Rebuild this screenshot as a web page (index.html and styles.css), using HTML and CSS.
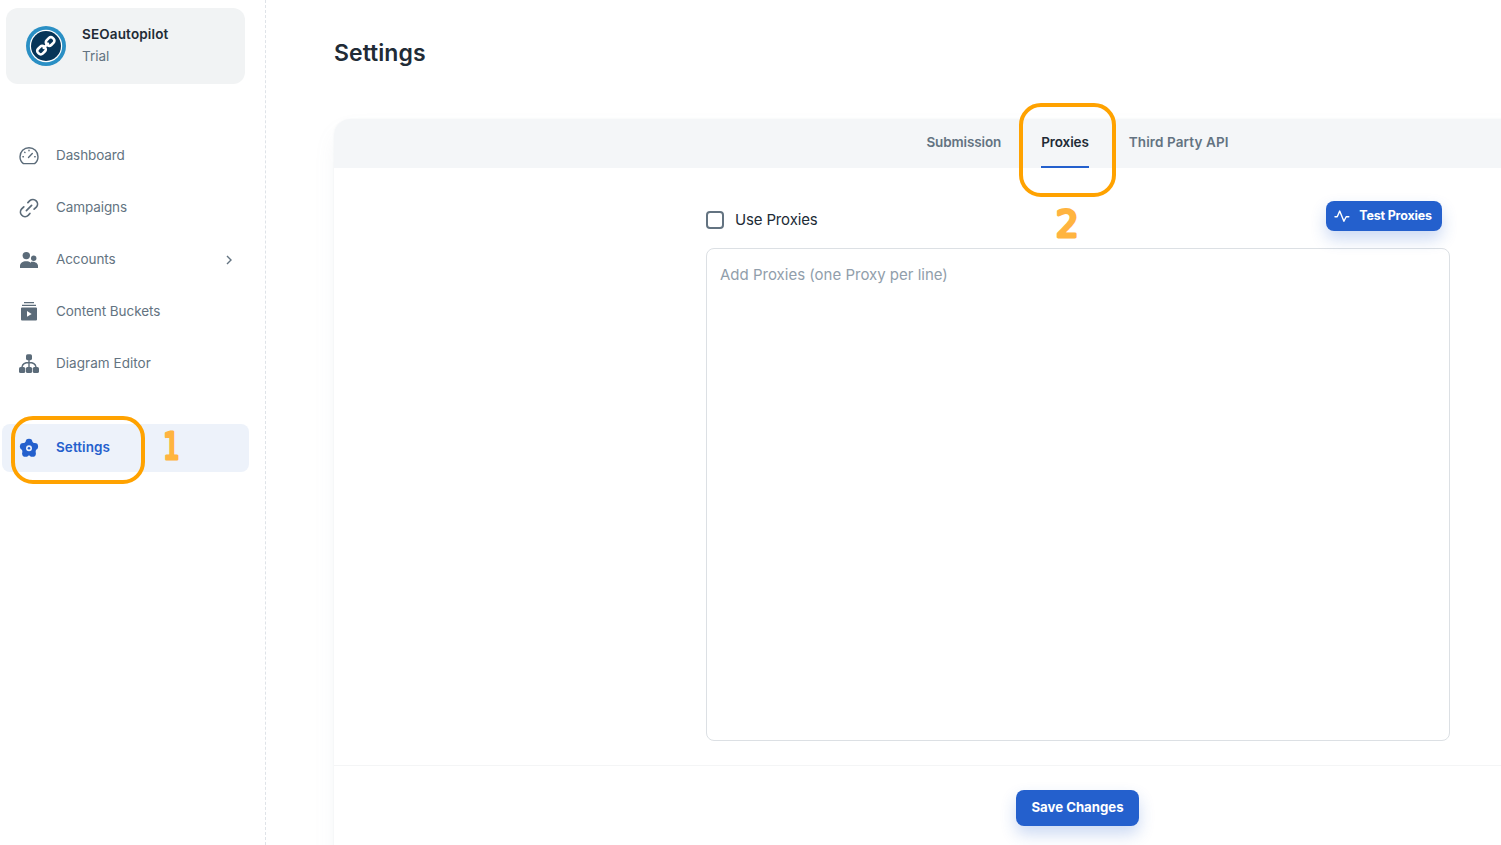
FILE: index.html
```html
<!DOCTYPE html>
<html lang="en">
<head>
<meta charset="utf-8">
<title>Settings</title>
<link rel="stylesheet" href="styles.css">
</head>
<body>
<div class="app">
  <aside class="sidebar">
    <div class="account">
      <svg class="avatar" viewBox="0 0 40 40">
        <circle cx="20" cy="20" r="20" fill="#2a8fc4"/>
        <circle cx="20" cy="20" r="16.2" fill="#fff"/>
        <circle cx="20" cy="20" r="15" fill="#073558"/>
        <g transform="translate(19.8 19.8) rotate(-45)" fill="none" stroke="#fff" stroke-width="2.6" stroke-linecap="round">
          <rect x="-10.4" y="-3.3" width="8.600" height="6.6" rx="2.600"/>
          <rect x="1.8" y="-3.3" width="8.600" height="6.6" rx="2.600"/>
          <path d="M-3 0h6"/>
        </g>
      </svg>
      <div class="account-text"><div class="account-name">SEOautopilot</div><div class="account-plan">Trial</div></div>
    </div>
    <nav class="nav">
      <a class="item"><svg class="icon" viewBox="0 0 20 20" fill="none" stroke="currentColor" stroke-width="1.4" stroke-linecap="round" stroke-linejoin="round"><path d="M4.4 17.6C2.2 16 1 13.500 1 10.700a9 9 0 0 1 18 0c0 2.800-1.200 5.300-3.400 6.900z"/><path d="M9.500 11.400l3.800-3.800M10 4.300v.5M5.700 6.200l.3.3M3.900 10.700h.5M15.700 10.700h.5"/></svg><span class="label t-dash">Dashboard</span></a>
      <a class="item"><svg class="icon" viewBox="0 0 20 20" fill="none" stroke="currentColor" stroke-width="1.7" stroke-linecap="round"><path d="M7.400 12.600l5.200-5.200M8.900 4.600l1.900-1.900a4.600 4.600 0 0 1 6.500 6.500l-2.200 2M4.800 8.800l-2.100 2.100a4.600 4.600 0 0 0 6.500 6.500l1.700-1.900"/></svg><span class="label t-camp">Campaigns</span></a>
      <a class="item"><svg class="icon" viewBox="0 0 20 20" fill="currentColor"><circle cx="7.300" cy="5.600" r="3.700"/><circle cx="14.700" cy="8.300" r="2.700"/><path d="M1 18v-2.100c0-3 2.700-4.700 6.200-4.700s6.200 1.700 6.200 4.700V18zM12 18v-6.200c3.300-.7 7 1 7 4V18z"/></svg><span class="label t-acc">Accounts</span><svg class="chevron" viewBox="0 0 10 10" fill="none" stroke="currentColor" stroke-width="1.4"><path d="M3 1l4 4-4 4"/></svg></a>
      <a class="item"><svg class="icon bucket" viewBox="0 0 20 20" fill="currentColor"><path d="M5 1h10v1.300H5zM3 3.800h14v1.300H3z"/><path fill-rule="evenodd" d="M3 6.500h14q1 0 1 1v11q0 1-1 1H3q-1 0-1-1v-11q0-1 1-1zM8 10v5.800l4.700-2.900z"/></svg><span class="label t-cont">Content Buckets</span></a>
      <a class="item"><svg class="icon" viewBox="0 0 20 20" fill="currentColor"><rect x="7" y="0.200" width="6" height="6" rx="1.600"/><rect x="0" y="13" width="6.200" height="6" rx="1.600"/><rect x="6.900" y="13" width="6.200" height="6" rx="1.600"/><rect x="13.800" y="13" width="6.200" height="6" rx="1.600"/><path fill="none" stroke="currentColor" stroke-width="1.400" d="M10 6v7M3 13c.5-3 3.500-4.500 7-4.500s6.500 1.500 7 4.500"/></svg><span class="label t-diag">Diagram Editor</span></a>
      <a class="item active"><svg class="icon" viewBox="0 0 20 20"><g fill="currentColor"><circle cx="10" cy="4.200" r="3.400"/><circle cx="15.700" cy="8.500" r="3.400"/><circle cx="13.500" cy="15.400" r="3.400"/><circle cx="6.500" cy="15.400" r="3.400"/><circle cx="4.300" cy="8.500" r="3.400"/><circle cx="10" cy="10.300" r="7.300"/></g><circle cx="10" cy="10.200" r="3" fill="#eaf0fc"/><circle cx="10" cy="10.200" r="1.300" fill="currentColor"/></svg><span class="label t-set">Settings</span><span class="ring ring-settings"></span><svg class="step step-one" viewBox="0 0 30 40"><text x="15" y="34" transform="translate(4.200 0) scale(.72 1)">1</text></svg></a>
    </nav>
  </aside>
  <main class="main">
    <h1 class="title">Settings</h1>
    <section class="card">
      <div class="tabs">
        <a class="tab t-sub">Submission</a>
        <a class="tab current">Proxies<span class="ring ring-proxies"></span><svg class="step step-two" viewBox="0 0 30 40"><text x="15" y="34">2</text></svg></a>
        <a class="tab t-api">Third Party API</a>
      </div>
      <div class="form">
        <div class="form-head">
          <label class="check"><span class="box"></span><span class="t-use">Use Proxies</span></label>
          <button class="btn test"><svg class="pulse" viewBox="0 0 16 16" fill="none" stroke="currentColor" stroke-width="1.400" stroke-linecap="round" stroke-linejoin="round"><path d="M1 8.700h2.200l2.500-5.600 4.200 10.200 2.300-4.600h2.600"/></svg><span>Test Proxies</span></button>
        </div>
        <div class="area">Add Proxies (one Proxy per line)</div>
      </div>
      <div class="footer"><button class="btn save">Save Changes</button></div>
    </section>
  </main>
</div>
</body>
</html>
```
FILE: styles.css
```css
* { box-sizing: border-box; }
body { margin: 0; background: #fff; color: #212b36; font-family: Inter, "Liberation Sans", sans-serif; overflow: hidden; }
.app { display: flex; height: 845px; overflow: hidden; }
.sidebar { flex: 0 0 266px; border-right: 1px dashed #dfe3e8; padding: 8px 16px 0 2px; }
.account { display: flex; align-items: center; gap: 16px; height: 76px; margin: 0 4px; width: 239px; padding-left: 20px; border-radius: 12px; background: #f1f3f4; font-size: 13.5px; line-height: 22px; }
.account-text { padding-bottom: 2px; }
.avatar { width: 40px; height: 40px; }
.account-name { font-weight: 600; letter-spacing: 0.15px; }
.account-plan { color: #637381; }
.nav { display: flex; flex-direction: column; gap: 4px; margin-top: 48px; }
.item { position: relative; display: flex; align-items: center; height: 48px; width: 247px; padding: 0 15px 2px 17px; border-radius: 8px; color: #637381; font-size: 13.5px; white-space: nowrap; }
.label { line-height: 18px; }
.t-dash { letter-spacing: -0.1px; }
.t-camp { letter-spacing: -0.1px; }
.t-acc { letter-spacing: -0.08px; }
.t-cont { letter-spacing: -0.06px; }
.t-diag { letter-spacing: 0.04px; }
.t-set { letter-spacing: 0.06px; }
.icon { width: 20px; height: 20px; margin-right: 17px; position: relative; top: 1px; color: #5b6b79; }
.bucket { top: 0; }
.chevron { width: 10px; height: 10px; margin-left: auto; position: relative; top: 1px; }
.active { margin-top: 32px; background: #edf2fa; color: #2460cd; font-weight: 600; }
.active .icon { color: #2460cd; }
.ring { position: absolute; border: 4px solid #ffa200; pointer-events: none; }
.ring-settings { left: 9px; top: -8px; width: 134px; height: 68px; border-radius: 22px; }
.ring-proxies { left: -22px; top: -16px; width: 97px; height: 94px; border-radius: 22px; }
.step { position: absolute; width: 30px; height: 40px; overflow: visible; font: 38px "DejaVu Sans Mono", monospace; letter-spacing: 0; text-anchor: middle; fill: #ffb440; stroke: #ffb440; stroke-width: 3px; stroke-linejoin: round; }
.step-one { left: 154px; top: 1px; }
.step-two { left: 11px; top: 84px; }
.main { flex: 1; min-width: 0; padding: 35px 0 0 68px; }
.title { margin: 0; font-size: 23px; line-height: 36px; font-weight: 600; letter-spacing: 0.05px; }
.card { width: 1487px; height: 800px; margin-top: 48px; border-radius: 16px; background: #fff; box-shadow: 0 0 2px rgba(145,158,171,.12), 0 12px 24px -4px rgba(145,158,171,.12); }
.tabs { display: flex; justify-content: center; gap: 40px; height: 49px; background: #f4f6f8; border-radius: 16px 16px 0 0; font-size: 13.5px; line-height: 46px; font-weight: 600; color: #637381; }
.tab { position: relative; white-space: nowrap; }
.t-sub { letter-spacing: -0.13px; }
.t-api { letter-spacing: 0.1px; }
.current { color: #212b36; border-bottom: 2px solid #2460cd; height: 49px; letter-spacing: -0.1px; }
.form { width: 744px; margin: 0 auto; height: 597px; position: relative; left: 0.5px; }
.form-head { display: flex; justify-content: space-between; align-items: flex-start; padding: 33px 8px 0 0; height: 80px; }
.check { display: flex; align-items: center; gap: 11px; height: 38px; font-size: 15px; }
.t-use { letter-spacing: -0.15px; padding-bottom: 1px; }
.box { width: 18px; height: 18px; border: 2px solid #637381; border-radius: 4px; }
.btn { display: flex; align-items: center; justify-content: center; border: 0; padding: 0; border-radius: 8px; background: #2460cd; color: #fff; font-family: inherit; font-weight: 700; box-shadow: 0 8px 16px rgba(36,96,205,.24); white-space: nowrap; }
.test { width: 116px; height: 30px; font-size: 12.5px; letter-spacing: -0.18px; gap: 9px; padding-right: 2px; }
.test span { position: relative; top: -1px; }
.pulse { width: 16px; height: 16px; }
.area { height: 493px; border: 1px solid #dce0e4; border-radius: 8px; padding: 14px 13px; font-size: 15px; line-height: 24px; color: #919eab; }
.footer { display: flex; justify-content: center; border-top: 1px solid #f4f5f6; padding-top: 24px; }
.save { width: 123px; height: 36px; font-size: 13.2px; padding-bottom: 2px; }
```
